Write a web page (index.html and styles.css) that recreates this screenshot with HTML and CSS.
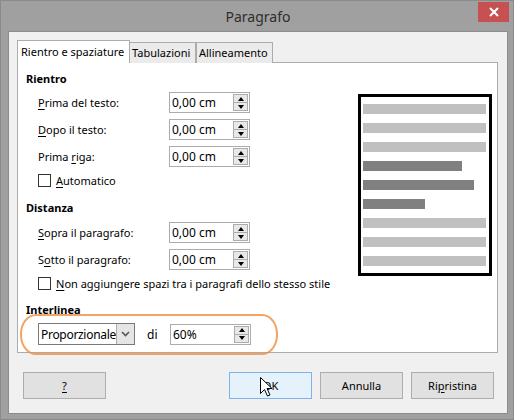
FILE: index.html
```html
<!DOCTYPE html>
<html>
<head>
<meta charset="utf-8">
<link rel="stylesheet" href="styles.css">
</head>
<body>
<div class="window">
  <div class="titlebar">
    <span class="title">Paragrafo</span>
    <div class="close"><svg width="10" height="10" viewBox="0 0 10 10"><path d="M1 1 L9 9 M9 1 L1 9" stroke="#fff" stroke-width="2"/></svg></div>
  </div>
  <div class="client">
    <div class="tabs">
      <div class="tab active t1">Rientro e spaziature</div>
      <div class="tab t2">Tabulazioni</div>
      <div class="tab t3">Allineamento</div>
    </div>
    <div class="panel">
      <div class="form">
        <div class="heading h-first">Rientro</div>
        <div class="row r-first">
          <span class="label"><u>P</u>rima del testo:</span>
          <div class="field"><span>0,00 cm</span><div class="spin"><div class="up"></div><div class="down"></div></div></div>
        </div>
        <div class="row">
          <span class="label"><u>D</u>opo il testo:</span>
          <div class="field"><span>0,00 cm</span><div class="spin"><div class="up"></div><div class="down"></div></div></div>
        </div>
        <div class="row">
          <span class="label">Prima <u>r</u>iga:</span>
          <div class="field"><span>0,00 cm</span><div class="spin"><div class="up"></div><div class="down"></div></div></div>
        </div>
        <div class="check"><span class="box"></span><span><u>A</u>utomatico</span></div>
        <div class="heading h-mid">Distanza</div>
        <div class="row r-first2">
          <span class="label"><u>S</u>opra il paragrafo:</span>
          <div class="field"><span>0,00 cm</span><div class="spin"><div class="up"></div><div class="down"></div></div></div>
        </div>
        <div class="row">
          <span class="label">S<u>o</u>tto il paragrafo:</span>
          <div class="field"><span>0,00 cm</span><div class="spin"><div class="up"></div><div class="down"></div></div></div>
        </div>
        <div class="check"><span class="box"></span><span><u>N</u>on aggiungere spazi tra i paragrafi dello stesso stile</span></div>
        <div class="heading h-last">Interlinea</div>
        <div class="row r-last">
          <div class="select"><span>Proporzionale</span><div class="drop"><svg width="9" height="6" viewBox="0 0 9 6"><path d="M1 1 L4.5 4.5 L8 1" stroke="#555" stroke-width="1.6" fill="none"/></svg></div></div>
          <span class="di">di</span>
          <div class="field"><span>60%</span><div class="spin"><div class="up"></div><div class="down"></div></div></div>
        </div>
      </div>
      <div class="preview">
        <div class="ln"></div>
        <div class="ln"></div>
        <div class="ln"></div>
        <div class="ln dark" style="width:99px"></div>
        <div class="ln dark" style="width:111px"></div>
        <div class="ln dark" style="width:62px"></div>
        <div class="ln"></div>
        <div class="ln"></div>
        <div class="ln"></div>
      </div>
    </div>
    <div class="buttons">
      <div class="btn"><u>?</u></div>
      <div class="spacer"></div>
      <div class="btn default">OK</div>
      <div class="btn">Annulla</div>
      <div class="btn">Ri<u>p</u>ristina</div>
    </div>
  </div>
  <div class="highlight"></div>
  <svg class="cursor" width="13" height="20" viewBox="0 0 13 20"><path d="M0.5 0.5 L0.5 16.5 L4.5 12.5 L7.5 19 L10 18 L7 11.5 L12 11.5 Z" fill="#fff" stroke="#000" stroke-width="1" stroke-linejoin="miter"/></svg>
</div>
</body>
</html>
```

FILE: styles.css
```css
* { box-sizing: border-box; }
html, body { margin: 0; padding: 0; }
body {
  font-family: "Noto Sans", "Open Sans", sans-serif;
  font-size: 11px;
  color: #000;
  background: #a0a0a0;
}
u { text-decoration: underline; text-underline-offset: 2px; }
.window {
  position: relative;
  width: 514px;
  height: 420px;
  background: #a0a0a0;
  border: 1px solid #8a8a8a;
  display: flex;
  flex-direction: column;
}
.titlebar {
  height: 30px;
  position: relative;
  display: flex;
  align-items: center;
  justify-content: center;
}
.title {
  font-size: 14px;
  color: #2e2e2e;
  margin-left: 2px;
  margin-top: 1px;
}
.close {
  position: absolute;
  right: 4px;
  top: 1px;
  width: 31px;
  height: 20px;
  background: #c75050;
  display: flex;
  align-items: center;
  justify-content: center;
}
.client {
  margin: 0 5px 5px 7px;
  flex: 1;
  background: #f0f0f0;
  border: 1px solid #8c8c8c;
  padding: 8px 9px 0 8px;
  display: flex;
  flex-direction: column;
}
.tabs {
  display: flex;
  align-items: flex-end;
  height: 23px;
  position: relative;
  z-index: 2;
}
.tab {
  height: 21px;
  border: 1px solid #acacac;
  border-bottom: none;
  background: #ebebeb;
  line-height: 19px;
  padding-left: 2px;
  white-space: nowrap;
  overflow: hidden;
}
.tab.active {
  height: 23px;
  background: #fff;
  line-height: 22px;
  padding-left: 3px;
}
.t1 { width: 113px; }
.t2 { width: 66px; border-left: none; }
.t3 { width: 77px; border-left: 1px solid #acacac; }
.panel {
  margin-top: -1px;
  height: 291px;
  width: 481px;
  background: #fff;
  border: 1px solid #acacac;
  display: flex;
  justify-content: space-between;
  align-items: flex-start;
}
.form {
  padding: 0 0 0 8px;
  display: flex;
  flex-direction: column;
}
.heading {
  font-weight: bold;
  height: 16px;
  line-height: 16px;
}
.h-first { margin-top: 8px; }
.h-mid { margin-top: 11px; }
.h-last { margin-top: 10px; }
.row {
  display: flex;
  align-items: center;
  height: 21px;
  margin-top: 6px;
  padding-left: 12px;
}
.r-first { margin-top: 5px; }
.r-first2 { margin-top: 6px; }
.r-last { margin-top: 5px; height: 22px; }
.label {
  width: 131px;
  white-space: nowrap;
}
.field {
  width: 81px;
  height: 21px;
  border: 1px solid #acacac;
  background: #fff;
  display: flex;
  align-items: center;
  justify-content: space-between;
  padding: 0 1px 0 2px;
  font-size: 12px;
}
.spin {
  width: 15px;
  height: 17px;
  border: 1px solid #acacac;
  background: #e8e8e8;
  display: flex;
  flex-direction: column;
}
.spin .up, .spin .down {
  flex: 1;
  display: flex;
  align-items: center;
  justify-content: center;
}
.spin .down { border-top: 1px solid #acacac; }
.spin .up::before {
  content: "";
  border-left: 3.5px solid transparent;
  border-right: 3.5px solid transparent;
  border-bottom: 4px solid #000;
}
.spin .down::before {
  content: "";
  border-left: 3.5px solid transparent;
  border-right: 3.5px solid transparent;
  border-top: 4px solid #000;
}
.check {
  display: flex;
  align-items: center;
  height: 17px;
  margin-top: 5px;
  padding-left: 12px;
  white-space: nowrap;
}
.box {
  width: 13px;
  height: 13px;
  border: 1px solid #333;
  background: #fff;
  margin-right: 5px;
}
.select {
  width: 97px;
  height: 22px;
  border: 1px solid #7a7a7a;
  display: flex;
  align-items: center;
  padding-left: 2px;
  background: #fff;
  font-size: 12px;
}
.select span { flex: 1; white-space: nowrap; overflow: hidden; letter-spacing: -0.3px; }
.drop {
  width: 18px;
  height: 20px;
  background: #e5e5e5;
  border-left: 1px solid #acacac;
  display: flex;
  align-items: center;
  justify-content: center;
}
.di {
  width: 35px;
  padding-left: 12px;
  font-size: 12px;
}
.preview {
  margin: 31px 5px 0 0;
  width: 134px;
  height: 182px;
  border: 3px solid #000;
  padding: 7px 2px;
  display: flex;
  flex-direction: column;
  gap: 9px;
}
.ln {
  height: 10px;
  width: 123px;
  background: #c0c0c0;
}
.ln.dark { background: #808080; }
.buttons {
  display: flex;
  margin-top: 19px;
  padding: 0 4px 0 6px;
  gap: 8px;
}
.spacer { flex: 1; }
.btn {
  width: 83px;
  height: 27px;
  border: 1px solid #adadad;
  background: #e1e1e1;
  display: flex;
  align-items: center;
  justify-content: center;
}
.btn.default {
  border-color: #7eb4ea;
  background: #e5f1fb;
}
.highlight {
  position: absolute;
  left: 19px;
  top: 313px;
  width: 258px;
  height: 41px;
  border: 2px solid rgba(243, 140, 60, 0.8);
  border-radius: 16px / 20px;
}
.cursor {
  position: absolute;
  left: 259px;
  top: 376px;
}
```
